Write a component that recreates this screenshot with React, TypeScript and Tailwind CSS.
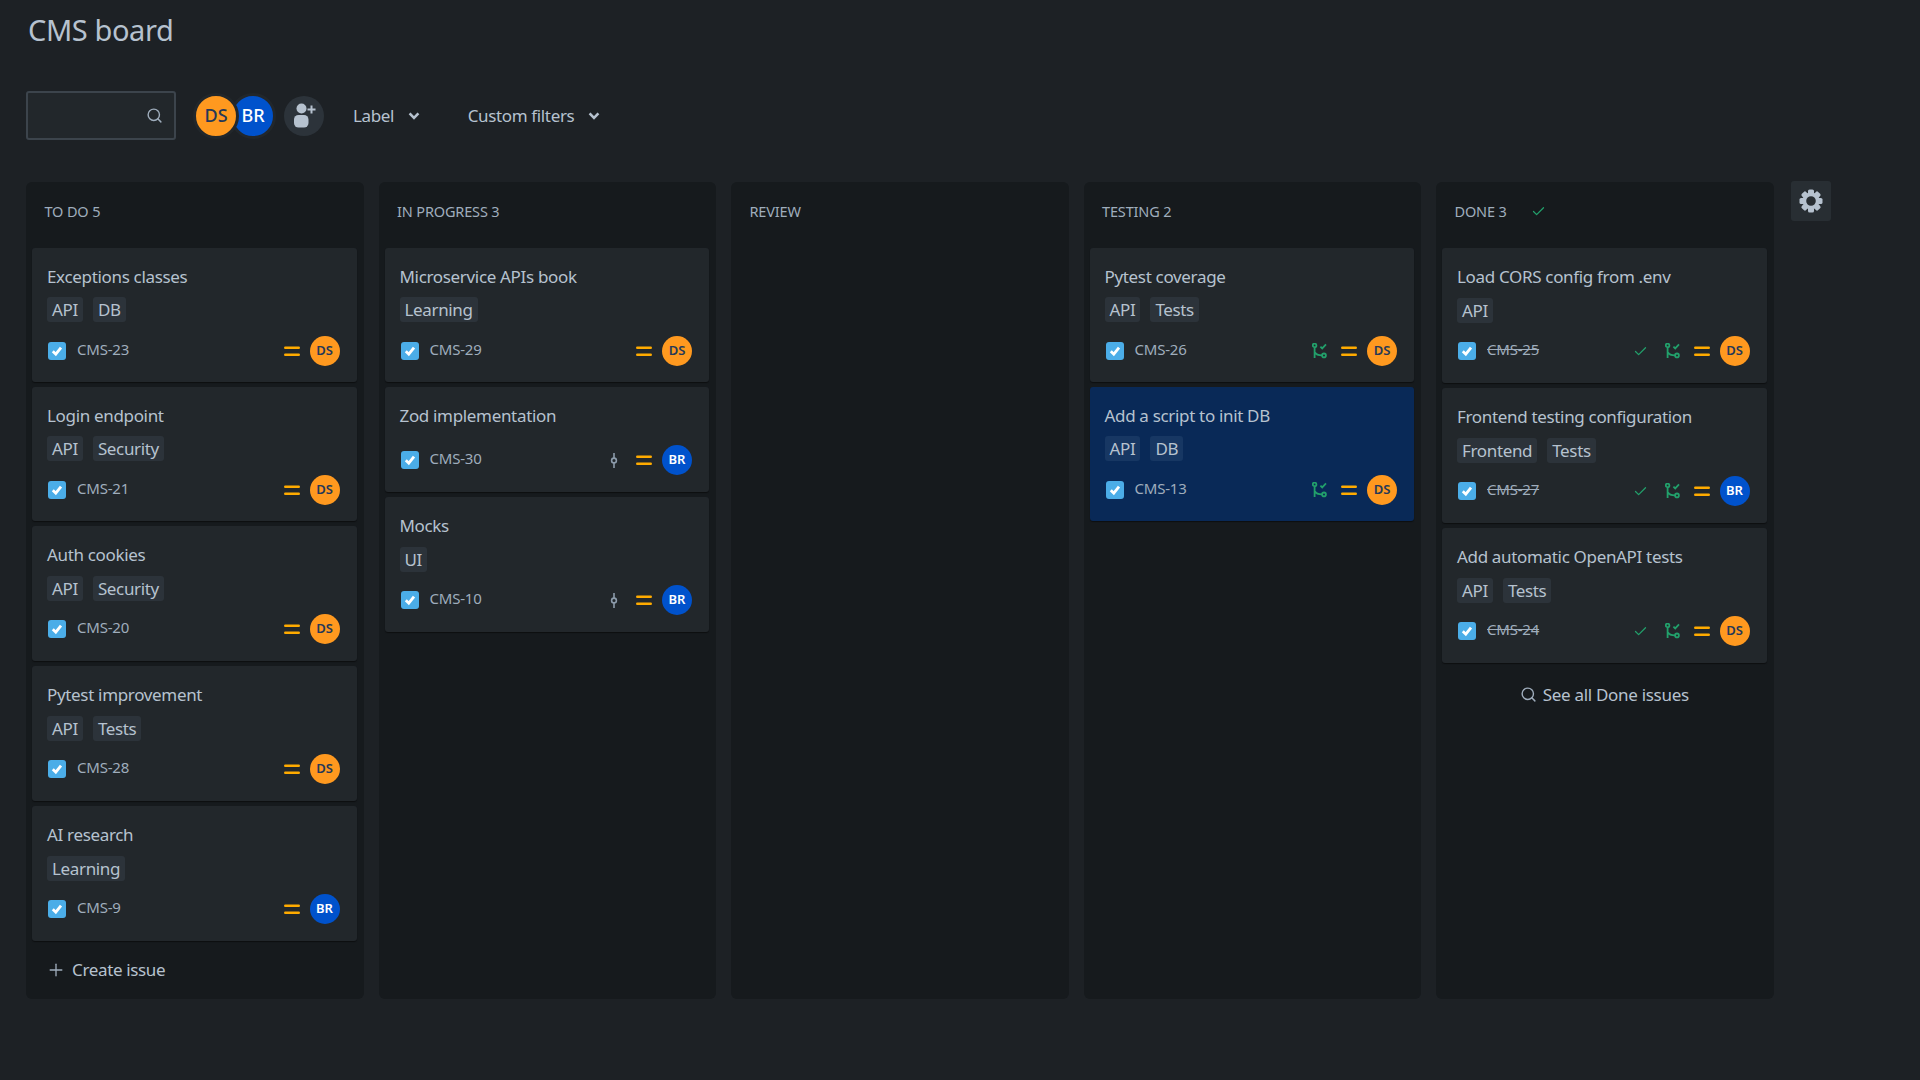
import { Search, Plus, Check } from "lucide-react";

type Who = "DS" | "BR";
type CardT = { title: string; tags: string[]; key: string; who: Who; h: number; icon?: "branch" | "commit"; done?: boolean; selected?: boolean };

const columns: { name: string; done?: boolean; cards: CardT[]; footer?: "create" | "see" }[] = [
  {
    name: "TO DO 5",
    footer: "create",
    cards: [
      { title: "Exceptions classes", tags: ["API", "DB"], key: "CMS-23", who: "DS", h: 134 },
      { title: "Login endpoint", tags: ["API", "Security"], key: "CMS-21", who: "DS", h: 134 },
      { title: "Auth cookies", tags: ["API", "Security"], key: "CMS-20", who: "DS", h: 135 },
      { title: "Pytest improvement", tags: ["API", "Tests"], key: "CMS-28", who: "DS", h: 135 },
      { title: "AI research", tags: ["Learning"], key: "CMS-9", who: "BR", h: 135 },
    ],
  },
  {
    name: "IN PROGRESS 3",
    cards: [
      { title: "Microservice APIs book", tags: ["Learning"], key: "CMS-29", who: "DS", h: 134 },
      { title: "Zod implementation", tags: [], key: "CMS-30", who: "BR", h: 105, icon: "commit" },
      { title: "Mocks", tags: ["UI"], key: "CMS-10", who: "BR", h: 135, icon: "commit" },
    ],
  },
  { name: "REVIEW", cards: [] },
  {
    name: "TESTING 2",
    cards: [
      { title: "Pytest coverage", tags: ["API", "Tests"], key: "CMS-26", who: "DS", h: 134, icon: "branch" },
      { title: "Add a script to init DB", tags: ["API", "DB"], key: "CMS-13", who: "DS", h: 134, icon: "branch", selected: true },
    ],
  },
  {
    name: "DONE 3",
    done: true,
    footer: "see",
    cards: [
      { title: "Load CORS config from .env", tags: ["API"], key: "CMS-25", who: "DS", h: 135, icon: "branch", done: true },
      { title: "Frontend testing configuration", tags: ["Frontend", "Tests"], key: "CMS-27", who: "BR", h: 135, icon: "branch", done: true },
      { title: "Add automatic OpenAPI tests", tags: ["API", "Tests"], key: "CMS-24", who: "DS", h: 135, icon: "branch", done: true },
    ],
  },
];

function CheckBox() {
  return (
    <span className="flex h-[18px] w-[18px] shrink-0 items-center justify-center rounded-[3px] bg-[#4bade8]">
      <svg width="12" height="12" viewBox="0 0 12 12" fill="none">
        <path d="M1.8 6.2 4.8 9.2 10 2.6" stroke="#fff" strokeWidth="2.8" />
      </svg>
    </span>
  );
}

function Priority() {
  return (
    <svg width="16" height="12" viewBox="0 0 16 12" className="shrink-0">
      <rect x="0" y="1.5" width="16" height="2.4" rx="1.2" fill="#ffab00" />
      <rect x="0" y="8.5" width="16" height="2.4" rx="1.2" fill="#ffab00" />
    </svg>
  );
}

function Branch() {
  return (
    <svg width="15" height="16" viewBox="0 0 15 16" fill="none" stroke="#22a06b" strokeWidth="1.8" className="mr-[14px] shrink-0">
      <circle cx="2.6" cy="2.4" r="1.8" />
      <circle cx="12" cy="12.4" r="1.9" />
      <path d="M2.6 4.2V15M3 9.4c1 2.2 3 3 7 3" />
      <path d="M8.4 3.6l1.8 1.8L14 1.4" />
    </svg>
  );
}

function Commit() {
  return (
    <svg width="8" height="15" viewBox="0 0 8 15" fill="none" stroke="#8c9bab" strokeWidth="1.6" className="mr-[18px] shrink-0">
      <circle cx="4" cy="7.5" r="2.4" />
      <path d="M4 0v5M4 10v5" />
    </svg>
  );
}

function Chevron() {
  return (
    <svg width="12" height="8" viewBox="0 0 12 8" fill="none" stroke="#b6c2cf" strokeWidth="2.6" className="ml-[14px] shrink-0">
      <path d="M1.6 1.4 6 5.8l4.4-4.4" />
    </svg>
  );
}

function Gear() {
  const teeth = [0, 45, 90, 135, 180, 225, 270, 315];
  return (
    <svg width="24" height="24" viewBox="0 0 24 24" fill="#b6c2cf">
      <circle cx="12" cy="12" r="6.6" fill="none" stroke="#b6c2cf" strokeWidth="3.6" />
      {teeth.map((a) => (
        <rect key={a} x="9" y="0.5" width="6" height="5" rx="1.6" transform={`rotate(${a} 12 12)`} />
      ))}
    </svg>
  );
}

function Avatar({ who }: { who: Who }) {
  return (
    <span
      className={
        who === "DS"
          ? "ml-[10px] flex h-[30px] w-[30px] shrink-0 items-center justify-center rounded-full bg-[#ff991f] text-[13px] font-semibold text-[#253858]"
          : "ml-[10px] flex h-[30px] w-[30px] shrink-0 items-center justify-center rounded-full bg-[#0052cc] text-[13px] font-semibold text-white"
      }
    >
      {who}
    </span>
  );
}

function IssueCard({ c }: { c: CardT }) {
  const tall = c.h === 135;
  return (
    <div
      style={{ height: c.h }}
      className={
        c.selected
          ? "flex flex-col rounded-[3px] bg-[#092957] pl-[15px] pr-[17px] pt-[16px] shadow-[0_1px_1px_#03040480]"
          : "flex flex-col rounded-[3px] bg-[#22272b] pl-[15px] pr-[17px] pt-[16px] shadow-[0_1px_1px_#03040480]"
      }
    >
      <div className="flex h-[26px] items-center text-[17px] leading-[26px] tracking-[-0.33px] text-[#b6c2cf]">{c.title}</div>
      {c.tags.length > 0 && (
        <div className={tall ? "mt-[8px] flex gap-[10px]" : "mt-[7px] flex gap-[10px]"}>
          {c.tags.map((t) => (
            <span
              key={t}
              className={
                c.selected
                  ? "flex h-[25px] items-center rounded-[3px] bg-[#173763] px-[5px] text-[17px] tracking-[-0.35px] text-[#b6c2cf]"
                  : "flex h-[25px] items-center rounded-[3px] bg-[#2c333a] px-[5px] text-[17px] tracking-[-0.35px] text-[#b6c2cf]"
              }
            >
              {t}
            </span>
          ))}
        </div>
      )}
      <div className={c.tags.length > 0 ? (tall ? "mt-[13px] flex h-[30px] items-center" : "mt-[14px] flex h-[30px] items-center") : "mt-[16px] flex h-[30px] items-center"}>
        <span className="ml-px flex">
          <CheckBox />
        </span>
        <span className={c.done ? "mb-[3px] ml-[11px] text-[15px] tracking-[-0.2px] text-[#9fadbc] line-through" : "mb-[3px] ml-[11px] text-[15px] tracking-[-0.2px] text-[#9fadbc]"}>{c.key}</span>
        <span className="flex-1" />
        {c.done && <Check size={15} strokeWidth={2} className="mr-[17px] text-[#22a06b]" />}
        {c.icon === "branch" && <Branch />}
        {c.icon === "commit" && <Commit />}
        <Priority />
        <Avatar who={c.who} />
      </div>
    </div>
  );
}

function UserPlus() {
  return (
    <svg width="23" height="25" viewBox="0 0 23 25" fill="#b6c2cf">
      <circle cx="8.5" cy="5.5" r="5" />
      <rect x="1" y="12" width="14.5" height="12.5" rx="4.5" />
      <path d="M17.5 2.5h2v3h3v2h-3v3h-2v-3h-3v-2h3z" />
    </svg>
  );
}

export default function App() {
  return (
    <div className="h-[1080px] w-[1920px] overflow-hidden bg-[#1d2125] font-['Noto_Sans',sans-serif] text-[#b6c2cf]">
      <div className="flex h-[60px] items-center pl-[28px] text-[29px] tracking-[-0.4px] text-[#b6c2cf]">CMS board</div>

      <div className="ml-[26px] mt-[31px] flex h-[49px] items-center">
        <div className="flex h-[49px] w-[150px] items-center justify-end rounded-[3px] border-2 border-[#3c444c] bg-[#22272b] pr-[11px]">
          <Search size={17} strokeWidth={2} className="text-[#9fadbc]" />
        </div>
        <div className="ml-[17px] flex items-center">
          <span className="relative z-10 flex h-[46px] w-[46px] items-center justify-center rounded-full border-[3px] border-[#22272b] bg-[#ff991f] text-[18px] font-medium text-[#253858]">DS</span>
          <span className="-ml-[9px] flex h-[46px] w-[46px] items-center justify-center rounded-full border-[3px] border-[#22272b] bg-[#0052cc] text-[18px] font-medium text-white">BR</span>
        </div>
        <div className="ml-[8px] flex h-[40px] w-[40px] items-center justify-center rounded-full bg-[#2c333a]">
          <UserPlus />
        </div>
        <span className="ml-[29px] mt-[1px] text-[17px] tracking-[-0.35px]">Label</span>
        <Chevron />
        <span className="ml-[47.5px] mt-[1px] text-[17px] tracking-[-0.35px]">Custom filters</span>
        <Chevron />
      </div>

      <div className="ml-[26px] mt-[42px] flex items-start">
        <div className="flex gap-[15px]">
          {columns.map((col) => (
            <div key={col.name} className="flex h-[817px] w-[337.5px] flex-col rounded-[6px] bg-[#161a1d] pl-[6px] pr-[7px]">
              <div className="flex h-[66px] shrink-0 items-center pb-[7px] pl-[12.5px] text-[14.5px] tracking-[-0.15px] text-[#9fadbc]">
                {col.name}
                {col.done && <Check size={15} strokeWidth={2} className="ml-[24px] text-[#22a06b]" />}
              </div>
              <div className="flex flex-col gap-[5px]">
                {col.cards.map((c) => (
                  <IssueCard key={c.key} c={c} />
                ))}
              </div>
              {col.footer === "create" && (
                <div className="mt-[15px] flex h-[27px] items-center pl-[14px] text-[17px] tracking-[-0.35px]">
                  <Plus size={20} strokeWidth={1.6} className="mr-[6px] text-[#9fadbc]" />
                  Create issue
                </div>
              )}
              {col.footer === "see" && (
                <div className="mt-[18px] flex h-[27px] items-center justify-center text-[17px] tracking-[-0.3px]">
                  <Search size={17} strokeWidth={2} className="mr-[6px] text-[#9fadbc]" />
                  See all Done issues
                </div>
              )}
            </div>
          ))}
        </div>
        <div className="-mt-px ml-[17.5px] flex h-[40px] w-[40px] items-center justify-center rounded-[3px] bg-[#282e33]">
          <Gear />
        </div>
      </div>
    </div>
  );
}
